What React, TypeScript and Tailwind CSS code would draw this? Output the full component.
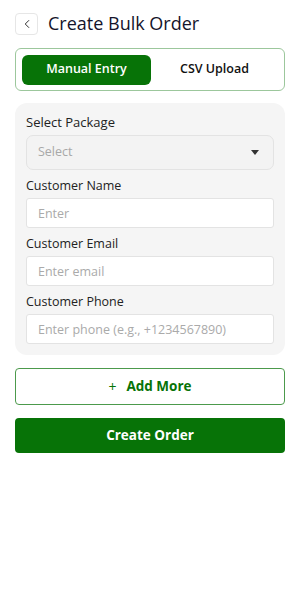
import { ChevronLeft } from "lucide-react"

export default function App() {
  const fields = [
    { label: "Customer Name", placeholder: "Enter" },
    { label: "Customer Email", placeholder: "Enter email" },
    { label: "Customer Phone", placeholder: "Enter phone (e.g., +1234567890)" },
  ]

  return (
    <div className="min-h-[612px] w-[300px] bg-white px-[15px] pt-3 font-['Open_Sans',sans-serif] text-[#1a1a2e]">
      {/* header */}
      <div className="flex items-center gap-[10px]">
        <button className="flex h-[22px] w-[23px] items-center justify-center rounded-[4px] border border-[#e6e6e6] bg-white">
          <ChevronLeft size={14} strokeWidth={1.6} className="text-[#222]" />
        </button>
        <h1 className="text-[18px] leading-[23px] text-[#14142b]">Create Bulk Order</h1>
      </div>

      {/* tabs */}
      <div className="mt-[13px] flex h-[43px] items-center rounded-[6px] border border-[#9cc79c] p-[6px]">
        <button className="h-[30px] w-[129px] rounded-[6px] bg-[#077307] text-[12.5px] font-semibold text-white">
          Manual Entry
        </button>
        <button className="h-[30px] flex-1 text-[12.5px] font-semibold text-[#111]">CSV Upload</button>
      </div>

      {/* form card */}
      <div className="mt-[12px] rounded-[12px] bg-[#f5f5f5] p-[11px]">
        <label className="block text-[13px] leading-[17px] text-[#222]">Select Package</label>
        <div className="mt-[4px] flex h-[35px] items-center justify-between rounded-[7px] border border-[#e3e3e3] bg-[#f3f3f3] pl-[11px] pr-[14px]">
          <span className="text-[12.5px] text-[#a8a8a8]">Select</span>
          <svg width="8" height="5" viewBox="0 0 8 5">
            <path d="M0 0h8L4 5z" fill="#333" />
          </svg>
        </div>

        {fields.map((f) => (
          <div key={f.label} className="mt-[7px]">
            <label className="block text-[12.5px] leading-[17px] text-[#222]">{f.label}</label>
            <input
              placeholder={f.placeholder}
              className="mt-[4px] h-[30px] w-full rounded-[3px] border border-[#e3e3e3] bg-white px-[11px] text-[12.5px] outline-none placeholder:text-[#aaa]"
            />
          </div>
        ))}
      </div>

      {/* actions */}
      <button className="mt-[13px] flex h-[37px] w-full items-center justify-center gap-[10px] rounded-[4px] border border-[#4c9a4c] bg-white text-[13.5px] font-bold text-[#077307]">
        <span className="text-[14px] font-normal">+</span>
        Add More
      </button>
      <button className="mt-[13px] h-[35px] w-full rounded-[4px] bg-[#077307] text-[13.5px] font-bold text-white">
        Create Order
      </button>
    </div>
  )
}
